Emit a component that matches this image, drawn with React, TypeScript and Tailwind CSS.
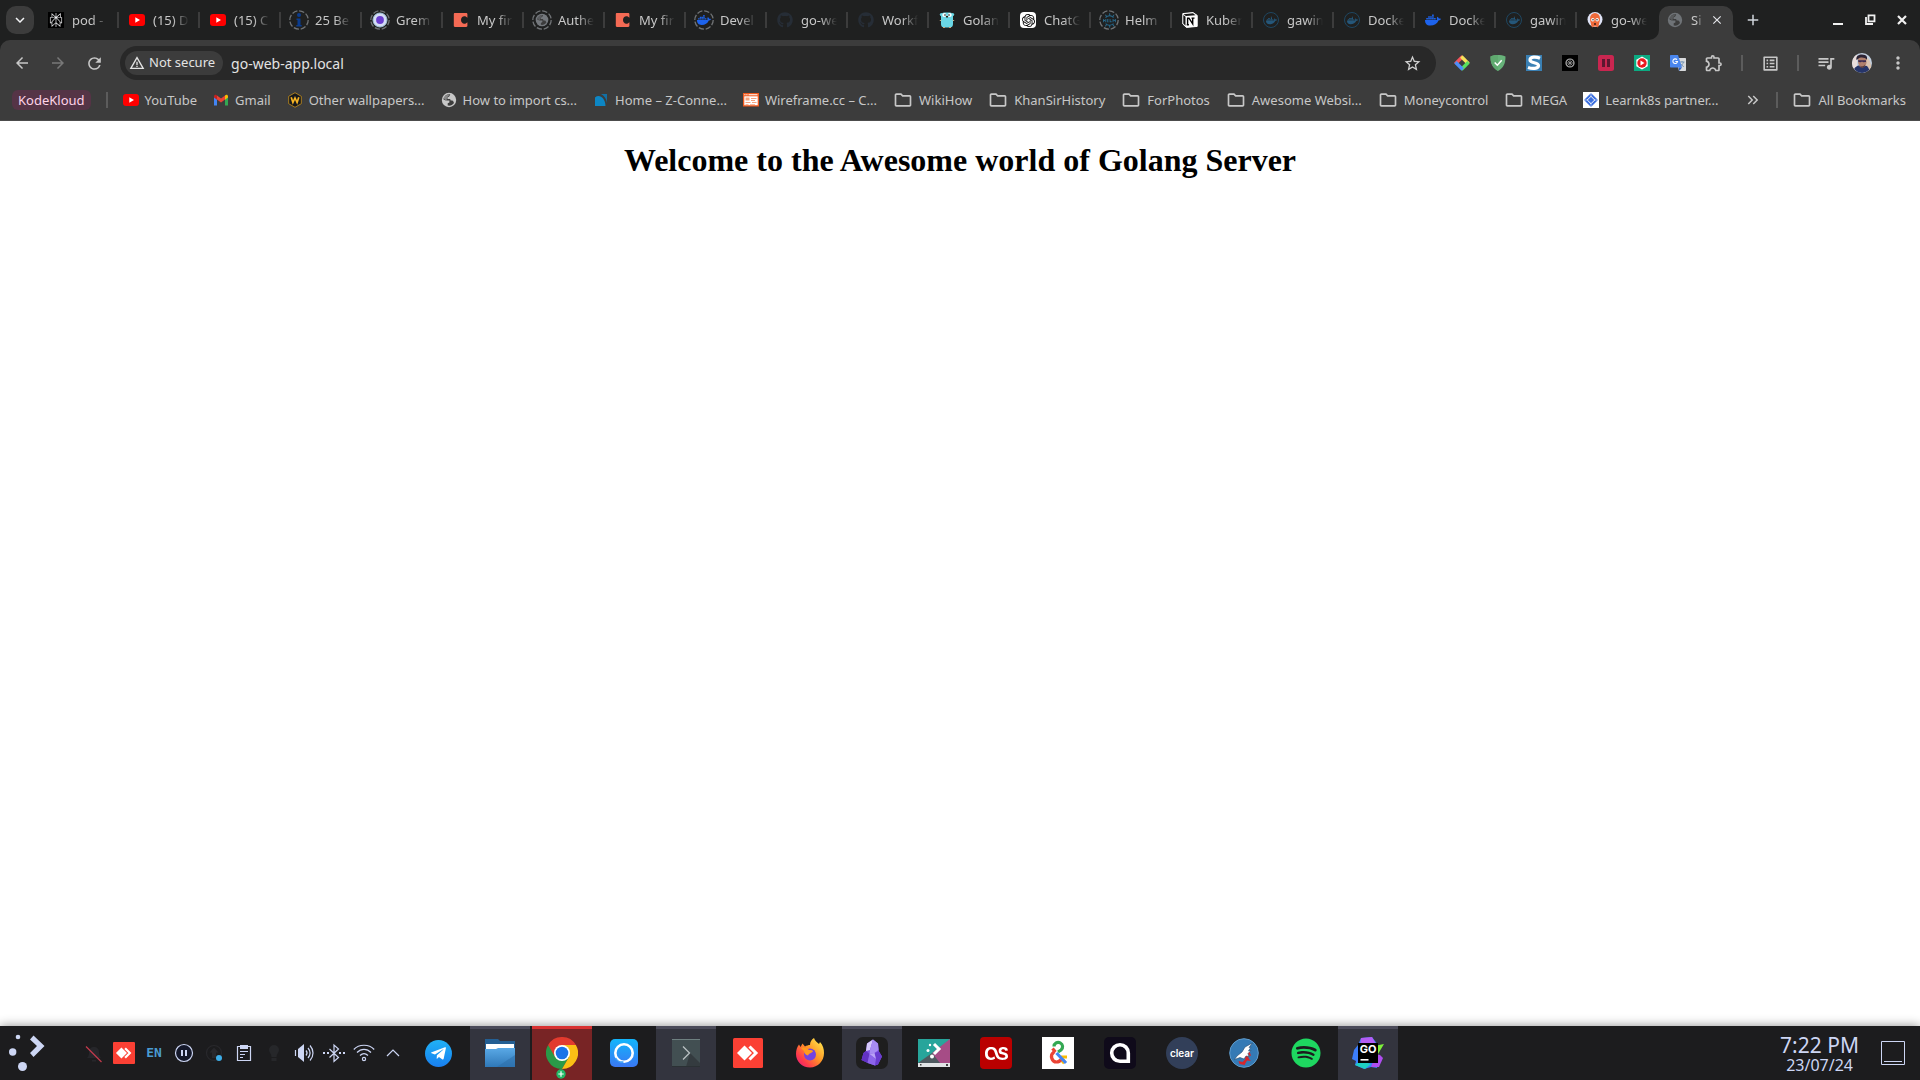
import React from "react";
import { FaDocker, FaGithub, FaTelegramPlane, FaSpotify } from "react-icons/fa";
import { SiOpenai, SiHelm, SiLastdotfm, SiPerplexity } from "react-icons/si";
import {
  MdArrowBack,
  MdArrowForward,
  MdRefresh,
  MdStarBorder,
  MdWarningAmber,
  MdOutlineExtension,
  MdQueueMusic,
  MdMoreVert,
  MdOutlineFolder,
  MdClose,
  MdAdd,
  MdOutlineListAlt,
  MdKeyboardDoubleArrowRight,
  MdKeyboardArrowDown,
} from "react-icons/md";

/* ---------- small favicons (16px) ---------- */

function Ringed({ children }: { children: React.ReactNode }) {
  return (
    <span className="relative grid size-4 place-items-center">
      <svg viewBox="0 0 20 20" className="absolute -inset-0.5 size-5 max-w-none" fill="none">
        <circle cx="10" cy="10" r="9.2" stroke="#707376" strokeWidth="1.3" strokeDasharray="5.4 1.8" />
      </svg>
      {children}
    </span>
  );
}

const Globe = ({ color, className }: { color: string; className: string }) => (
  <svg viewBox="0 0 16 16" className={className}>
    <circle cx="8" cy="8" r="7.2" fill={color} />
    <path
      d="M9.300 2.300C6 1.800 3 3.800 2.300 7.200l2.500 1.400h3.600v1.800l-1.700.9v2.200c2.600.6 5-.7 6.300-2.600l-1-2.100-2.700-.5V6.900H6.500V5.200l1.700-.6z"
      fill="#3c3c3c"
    />
    <path d="M2.600 6.200 5.500 8.800 6 5.600l2.500-2.800C5.800 2.200 3.300 3.600 2.600 6.200z" fill={color} opacity=".55" />
  </svg>
);

const YouTube = () => (
  <svg viewBox="0 0 16 16" className="size-4">
    <rect y="2" width="16" height="12" rx="3" fill="#f00" />
    <path d="M6.3 5.3v5.4L11 8z" fill="#fff" />
  </svg>
);

const PerplexityTile = () => (
  <span className="grid size-4 place-items-center bg-black text-gray-100">
    <SiPerplexity size={14} />
  </span>
);

const Info = () => (
  <svg viewBox="0 0 12 14" className="h-3.5 w-3" fill="#0b3c8f">
    <circle cx="6" cy="2" r="2" />
    <path d="M3.5 5.5h4V12h1.2v1.6H3.3V12h1.2V7h-1z" />
  </svg>
);

const Gremlin = () => (
  <svg viewBox="0 0 16 16" className="size-4">
    <circle cx="8" cy="8" r="7" fill="#d5dcf5" />
    <circle cx="8" cy="8" r="7" fill="none" stroke="#9fc4d8" strokeWidth="1" />
    <circle cx="8" cy="8" r="3.9" fill="#6a3fd0" />
  </svg>
);

const Coda = () => (
  <svg viewBox="0 0 16 16" className="size-4">
    <path
      fill="#f46a54"
      d="M1.8 1h11.4c.7 0 1.2.5 1.2 1.2v3.6C13.7 5 12.600 4.300 11.400 4.300c-2 0-3.400 1.700-3.400 3.700s1.400 3.700 3.400 3.700c1.200 0 2.300-.7 3-1.500v3.600c0 .7-.5 1.200-1.200 1.200H1.800C1.300 15 .8 14.500.8 13.800V2.200C.8 1.500 1.300 1 1.800 1z"
    />
  </svg>
);

const Gopher = () => (
  <svg viewBox="0 0 16 16" className="size-4">
    <circle cx="2.300" cy="2.400" r="1.500" fill="#6ad7e5" />
    <circle cx="13.700" cy="2.400" r="1.500" fill="#6ad7e5" />
    <rect x="2" y="0.500" width="12" height="15" rx="3.500" fill="#6ad7e5" />
    <circle cx="5.300" cy="3" r="2" fill="#fff" />
    <circle cx="10.700" cy="3" r="2" fill="#fff" />
    <circle cx="6" cy="3" r=".8" fill="#111" />
    <circle cx="10" cy="3" r=".8" fill="#111" />
    <rect x="7" y="4" width="2" height="1.500" fill="#2d2418" />
    <path d="M.8 8.500h1.400M13.800 8.500h1.400M4 15.500h2M10 15.500h2" stroke="#c9a678" strokeWidth="1" />
  </svg>
);

const ChatGPT = () => (
  <span className="grid size-4 place-items-center rounded-sm bg-white text-black">
    <SiOpenai size={13} />
  </span>
);

const Notion = () => (
  <svg viewBox="0 0 16 16" className="size-4">
    <path d="M.8 1.600 11 .6l4.200 2.800v11l-10.800 1L.8 12z" fill="#fff" stroke="#fff" strokeWidth="1" strokeLinejoin="round" />
    <path d="M1.500 2.300 11 1.300l2.500 1.900-9.600.8zM1.300 3l2.200 1.700v9L1.300 11.500z" fill="#161616" />
    <path d="M5.600 12.800V6.300M5 6.200h2l3.700 5.600V6.200M9.500 6.100h3M4.700 12.800h2.200" fill="none" stroke="#000" strokeWidth="1.400" />
  </svg>
);

const DockerHub = () => (
  <span className="grid size-4 place-items-center rounded-full border border-[#1e4660] text-[#25577a]">
    <FaDocker size={11} />
  </span>
);

const Argo = () => (
  <svg viewBox="0 0 16 16" className="size-4">
    <circle cx="8" cy="7.500" r="7.500" fill="#dfe3f6" />
    <path d="M3 6.500a5 5.500 0 0 1 10 0c0 3.300-1 4.500-1.200 7l-1 2-1.300-1h-3l-1.300 1-1-2C4 11 3 9.800 3 6.500z" fill="#ef6a3a" />
    <circle cx="5.800" cy="7.800" r="1.700" fill="#fff" />
    <circle cx="10.200" cy="7.800" r="1.700" fill="#fff" />
    <circle cx="6" cy="7.800" r=".7" fill="#111" />
    <circle cx="10" cy="7.800" r=".7" fill="#111" />
    <path d="M7 11.200h2v1.500H7z" fill="#3b1d18" />
  </svg>
);

const Gmail = () => (
  <svg viewBox="0 0 16 16" className="size-4">
    <path d="M1 4.500V13.400h3V7z" fill="#4285f4" />
    <path d="M12 7v6.400h3V4.500z" fill="#34a853" />
    <path d="M4 3.600v4L8 10.600l4-3v-4l-4 3z" fill="#ea4335" />
    <path d="M1 4.300v1.300l3 2.200V3.600l-.8-.6C2.300 2.400 1 3 1 4.300z" fill="#c5221f" />
    <path d="M15 4.300v1.300l-3 2.200V3.600l.8-.6c.9-.6 2.200 0 2.200 1.300z" fill="#fbbc04" />
  </svg>
);

const Wallpapers = () => (
  <svg viewBox="0 0 16 16" className="size-4">
    <path d="M8 .7 14.300 4.300v7.400L8 15.300 1.700 11.700V4.300z" fill="#16181c" stroke="#c8901c" strokeWidth=".8" />
    <path d="m4.200 5.300 1.700 5.200L8 6l2.100 4.500 1.700-5.200" fill="none" stroke="#f5b324" strokeWidth="1.700" />
  </svg>
);

const Zerodha = () => (
  <svg viewBox="0 0 16 16" className="size-4">
    <path d="M2 5.500C6 2 12 5 12.500 14H2z" fill="#0d86c4" />
    <path d="M8 2h6v9C13.500 6.500 11 3.500 8 2z" fill="#1270a5" />
  </svg>
);

const Wireframe = () => (
  <svg viewBox="0 0 16 16" className="size-4">
    <path d="M0 1h16v13.500H0z" fill="#f05a1e" />
    <path d="M1.300 4.300h13.400v8.900H1.300z" fill="#fff" />
    <path d="M2.500 5.500h4v3h-4zM8 6h5.500v1H8zM8 8h4v1H8zM2.500 10h5v1h-5zM9 10h4.500v1H9zM2.500 12h3v.8h-3zM7 12h5v.8H7z" fill="#f5a37f" />
    <path d="M1.300 2.200h1.200v1H1.300zM3.300 2.200h1.200v1H3.300zM5.500 2.200h9v1h-9z" fill="#fff" />
  </svg>
);

const LearnK8s = () => (
  <svg viewBox="0 0 16 16" className="size-4">
    <path d="M0 0h16v16H0z" fill="#fff" />
    <path d="M8 1 15 8 8 15 1 8z" fill="#3b6fe0" />
    <path d="M8 4.300 11.700 8 8 11.700 4.300 8z" fill="none" stroke="#fff" strokeWidth="1" />
    <path d="M8 1v4M8 11v4M1 8h4M11 8h4" stroke="#fff" strokeWidth=".5" />
  </svg>
);

/* ---------- tab strip ---------- */

const tabs: { label: string; icon: React.ReactNode }[] = [
  { label: "pod -", icon: <PerplexityTile /> },
  { label: "(15) D", icon: <YouTube /> },
  { label: "(15) C", icon: <YouTube /> },
  { label: "25 Be", icon: <Ringed><Info /></Ringed> },
  { label: "Grem", icon: <Ringed><Gremlin /></Ringed> },
  { label: "My fir", icon: <Coda /> },
  { label: "Authe", icon: <Ringed><Globe color="#74787d" className="size-3.5" /></Ringed> },
  { label: "My fir", icon: <Coda /> },
  { label: "Devel", icon: <Ringed><FaDocker size={14} color="#1d63ed" /></Ringed> },
  { label: "go-we", icon: <FaGithub size={16} color="#262d36" /> },
  { label: "Workf", icon: <FaGithub size={16} color="#262d36" /> },
  { label: "Golan", icon: <Gopher /> },
  { label: "ChatG", icon: <ChatGPT /> },
  { label: "Helm", icon: <Ringed><SiHelm size={15} color="#27678a" /></Ringed> },
  { label: "Kuber", icon: <Notion /> },
  { label: "gawin", icon: <DockerHub /> },
  { label: "Docke", icon: <DockerHub /> },
  { label: "Docke", icon: <FaDocker size={16} color="#1d63ed" /> },
  { label: "gawin", icon: <DockerHub /> },
  { label: "go-we", icon: <Argo /> },
];

const Flare = ({ className, d }: { className: string; d: string }) => (
  <svg viewBox="0 0 10 10" className={className}>
    <path d={d} fill="#3c3c3c" />
  </svg>
);

function TabStrip() {
  return (
    <div className="flex h-10 items-center bg-[#1f2020] pl-1.5 pr-0.5 text-[#c7c7c7]">
      <button aria-label="Search tabs" className="mr-1 grid size-7 shrink-0 place-items-center rounded-[10px] bg-[#3c3c3c] text-gray-100">
        <MdKeyboardArrowDown size={18} />
      </button>
      <div role="tablist" className="flex h-10 min-w-0 items-center">
        {tabs.map((t, i) => (
          <button key={i} role="tab" aria-selected="false" className="flex h-8 w-[81px] items-center pl-2.5">
            <span className="mr-2 grid size-4 shrink-0 place-items-center">{t.icon}</span>
            <span className="w-9 overflow-hidden whitespace-nowrap text-left text-[13px] leading-5 [mask-image:linear-gradient(to_right,black_55%,transparent)]">
              {t.label}
            </span>
            {i < tabs.length - 1 && <span className="ml-auto h-4 w-0.5 bg-[#3c3c3c]" />}
          </button>
        ))}
        <div className="relative ml-px flex h-[34px] w-[74px] items-center self-end rounded-t-[10px] bg-[#3c3c3c] pb-1.5 pl-2">
          <Flare className="absolute -left-2.5 bottom-0 size-2.5" d="M10 0v10H0A10 10 0 0 0 10 0z" />
          <Flare className="absolute -right-2.5 bottom-0 size-2.5" d="M0 0v10h10A10 10 0 0 1 0 0z" />
          <button role="tab" aria-selected="true" className="flex items-center">
            <Globe color="#6f7377" className="size-4" />
            <span className="ml-2 w-3 overflow-hidden whitespace-nowrap text-left text-[13px] leading-5 [mask-image:linear-gradient(to_right,black_50%,transparent)]">
              Si
            </span>
          </button>
          <button aria-label="Close tab" className="ml-1.5 grid size-4 place-items-center text-gray-200">
            <MdClose size={14} />
          </button>
        </div>
      </div>
      <button aria-label="New tab" className="ml-1.5 grid size-7 place-items-center text-gray-300">
        <MdAdd size={18} />
      </button>
      <div className="flex-1" />
      <button aria-label="Minimize" className="grid size-8 place-items-center">
        <svg viewBox="0 0 12 12" className="size-3"><path d="M1 9h10v2H1z" fill="#f1f1f1" /></svg>
      </button>
      <button aria-label="Restore" className="grid size-8 place-items-center">
        <svg viewBox="0 0 12 12" className="size-3" fill="none" stroke="#f1f1f1" strokeWidth="1.800">
          <path d="M4.500 1.400h6v6h-6zM2 3v7h7" />
        </svg>
      </button>
      <button aria-label="Close" className="grid size-8 place-items-center">
        <svg viewBox="0 0 12 12" className="size-3"><path d="m2 2 8 8M10 2l-8 8" stroke="#f1f1f1" strokeWidth="2.200" /></svg>
      </button>
    </div>
  );
}

/* ---------- toolbar ---------- */

const extensions: { name: string; icon: React.ReactNode }[] = [
  {
    name: "Colour diamond",
    icon: (
      <svg viewBox="0 0 16 16" className="size-4" fill="none" strokeWidth="3.400">
        <path d="M1.200 9 8.700 1.500" stroke="#f4525b" />
        <path d="m7.300 1.500 7.200 7.200" stroke="#f6e05a" />
        <path d="M14.500 7.300 7.300 14.500" stroke="#57e05f" />
        <path d="M8.700 14.500 1.500 7.300" stroke="#4d8ef7" />
      </svg>
    ),
  },
  {
    name: "AdGuard",
    icon: (
      <svg viewBox="0 0 16 16" className="size-4">
        <path d="M8 0c2.500 0 5 .4 7.500 1.500 0 7-1.800 11-7.500 14.500C2.300 12.500.5 8.500.5 1.500 3 .4 5.500 0 8 0z" fill="#67b279" />
        <path d="M8 0v16C2.300 12.500.5 8.500.5 1.500 3 .4 5.500 0 8 0z" fill="#5fa96f" />
        <path d="m4.700 7.500 2.600 2.700 4.400-5" fill="none" stroke="#fff" strokeWidth="1.500" />
      </svg>
    ),
  },
  {
    name: "Stylus",
    icon: (
      <svg viewBox="0 0 16 16" className="size-4">
        <path d="M0 0h16v16H0z" fill="#3a80b4" />
        <path d="M14 3.200C10 1.500 4 1.500 4 5c0 3.500 8.500 2 8.500 5.500 0 3.500-6.500 3.500-10.500 2" fill="none" stroke="#fff" strokeWidth="3.200" />
      </svg>
    ),
  },
  {
    name: "Dark wheel",
    icon: (
      <svg viewBox="0 0 16 16" className="size-4">
        <path d="M0 0h16v16H0z" fill="#000" />
        <circle cx="8" cy="8" r="4" fill="none" stroke="#aaa" strokeWidth="1.200" />
        <path d="M8 4v8M4 8h8M5.200 5.200l5.600 5.600M10.800 5.200l-5.600 5.600" stroke="#999" strokeWidth=".8" />
      </svg>
    ),
  },
  {
    name: "Pause",
    icon: (
      <svg viewBox="0 0 16 16" className="size-4">
        <rect width="16" height="16" rx="2.500" fill="#c92650" />
        <path d="M4 4h3v8H4zM9 4h3v8H9z" fill="#5c1730" />
      </svg>
    ),
  },
  {
    name: "Video enhancer",
    icon: (
      <svg viewBox="0 0 16 16" className="size-4">
        <path d="M0 0h16v16H0z" fill="#0bab82" />
        <path d="M8 1.500 13.700 4.700v6.600L8 14.500 2.300 11.300V4.700z" fill="#fff" />
        <circle cx="8" cy="8" r="4.700" fill="#e8191f" />
        <path d="M6.500 5.500v5L10.500 8z" fill="#fff" />
      </svg>
    ),
  },
  {
    name: "Translate",
    icon: (
      <svg viewBox="0 0 16 16" className="size-4">
        <path d="M6 3h9c.6 0 1 .4 1 1v11c0 .6-.4 1-1 1H9z" fill="#d8dadc" />
        <path d="M9.500 7h5M12 6v1M13.500 7c-.5 2-2 3.500-3.500 4.500M10.500 8.500c.8 1.500 2 2.500 3.300 3.200" fill="none" stroke="#6d8fae" strokeWidth=".9" />
        <path d="M1 0h7l4 12.500H1c-.6 0-1-.4-1-1V1c0-.6.4-1 1-1z" fill="#4a86ee" />
        <path d="M8.700 12.500H12L9.300 16z" fill="#2a5fc4" />
        <path d="M7 4.700A2.300 2.300 0 1 0 7.500 6.500H5.300" fill="none" stroke="#fff" strokeWidth="1.100" />
      </svg>
    ),
  },
  { name: "Extensions", icon: <MdOutlineExtension size={20} /> },
];

const Avatar = () => (
  <svg viewBox="0 0 20 20" className="size-5 rounded-full">
    <path d="M0 0h20v20H0z" fill="#c3cfdf" />
    <path d="M0 0h5v20H0z" fill="#e9dedd" />
    <path d="M14 4c4 2 6 8 5 16h-7z" fill="#d9c3b0" />
    <path d="M2 20c-1-5 2-7 6-8l7 1c2 2 3 5 2 7z" fill="#26356a" />
    <path d="M6 5c0-3 7-4 8 0l.5 4c0 3-2 5.500-4.500 5.500S6.500 12 6 9z" fill="#b0806e" />
    <path d="M4.500 7C3 1 13 0 15 4l0 3c-2-3-7-3-9-1z" fill="#2c2334" />
    <path d="M6 7.200h8V9l-3 .3-1-.8-1 .8-2.500-.3z" fill="#3a2b52" />
    <path d="M7.500 12c1 2 4 2 5.500-.5L12.500 14l-3 1z" fill="#55393a" />
  </svg>
);

const iconButton = "grid size-9 shrink-0 place-items-center text-[#c7c7c7]";

function Toolbar() {
  return (
    <div className="flex h-[46px] items-center rounded-t-[10px] bg-[#3c3c3c] pl-1 pr-1">
      <button aria-label="Back" className={iconButton}><MdArrowBack size={18} /></button>
      <button aria-label="Forward" className="grid size-9 shrink-0 place-items-center text-[#787878]"><MdArrowForward size={18} /></button>
      <button aria-label="Reload" className={iconButton}><MdRefresh size={19} /></button>
      <div className="ml-2 mr-2 flex h-[34px] min-w-0 flex-1 items-center rounded-full bg-[#282828] pl-[5px] pr-2">
        <button className="flex h-6 shrink-0 items-center gap-1 rounded-full bg-[#3c3c3c] pl-1 pr-2 text-[13px] text-[#e3e3e3]">
          <MdWarningAmber size={16} />
          Not secure
        </button>
        <input
          id="address"
          aria-label="Address"
          defaultValue="go-web-app.local"
          className="ml-2 h-7 min-w-0 flex-1 bg-transparent text-[14px] text-[#e3e3e3] outline-none"
        />
        <button aria-label="Bookmark this page" className="grid size-8 place-items-center text-[#d0d0d0]"><MdStarBorder size={19} /></button>
      </div>
      {extensions.map((e) => (
        <button key={e.name} aria-label={e.name} className={iconButton}>{e.icon}</button>
      ))}
      <span className="mx-[9px] h-4 w-0.5 bg-[#5c5c5c]" />
      <button aria-label="Reading list" className={iconButton}><MdOutlineListAlt size={19} /></button>
      <span className="mx-[9px] h-4 w-0.5 bg-[#5c5c5c]" />
      <button aria-label="Media controls" className={iconButton}><MdQueueMusic size={20} /></button>
      <button aria-label="Profile" className={iconButton}><Avatar /></button>
      <button aria-label="Menu" className={iconButton}><MdMoreVert size={20} /></button>
    </div>
  );
}

/* ---------- bookmarks bar ---------- */

const Folder = () => <MdOutlineFolder size={20} />;

const bookmarks: { label: string; icon: React.ReactNode }[] = [
  { label: "YouTube", icon: <YouTube /> },
  { label: "Gmail", icon: <Gmail /> },
  { label: "Other wallpapers...", icon: <Wallpapers /> },
  { label: "How to import cs...", icon: <Globe color="#c7c7c7" className="size-4" /> },
  { label: "Home – Z-Conne...", icon: <Zerodha /> },
  { label: "Wireframe.cc – C...", icon: <Wireframe /> },
  { label: "WikiHow", icon: <Folder /> },
  { label: "KhanSirHistory", icon: <Folder /> },
  { label: "ForPhotos", icon: <Folder /> },
  { label: "Awesome Websi...", icon: <Folder /> },
  { label: "Moneycontrol", icon: <Folder /> },
  { label: "MEGA", icon: <Folder /> },
  { label: "Learnk8s partner...", icon: <LearnK8s /> },
];

function BookmarksBar() {
  return (
    <nav aria-label="Bookmarks" className="flex h-[35px] items-center border-b border-[#4c4c4c] bg-[#3c3c3c] pb-1.5 pl-3 pr-3.5 text-[13px] leading-5 text-[#c7c7c7]">
      <button className="h-5 rounded-md bg-[#553446] px-1.5 text-[#ffd3e8]">KodeKloud</button>
      <span className="ml-[15px] mr-[7px] h-4 w-0.5 bg-[#5c5c5c]" />
      {bookmarks.map((b) => (
        <a key={b.label} href="#" className="flex shrink-0 items-center gap-1.5 whitespace-nowrap px-2">
          {b.icon}
          {b.label}
        </a>
      ))}
      <div className="flex-1" />
      <button aria-label="More bookmarks"><MdKeyboardDoubleArrowRight size={18} /></button>
      <span className="mx-3.5 h-4 w-0.5 bg-[#5c5c5c]" />
      <button className="flex items-center gap-1.5"><Folder />All Bookmarks</button>
    </nav>
  );
}

/* ---------- taskbar ---------- */

const AnyDesk = ({ className }: { className: string }) => (
  <svg viewBox="0 0 30 30" className={className}>
    <rect width="30" height="30" rx="1.500" fill="#fb4034" />
    <path d="m11.500 7.500 7.500 7.500-7.500 7.500L4 15z" fill="#fff" />
    <path d="m16.500 8.500 6.500 6.500-6.500 6.500" fill="none" stroke="#fff" strokeWidth="3" />
  </svg>
);

const tray: { name: string; icon: React.ReactNode }[] = [
  {
    name: "Notifications muted",
    icon: (
      <svg viewBox="0 0 22 22" className="size-[22px]">
        <path d="M4 16h14c-2-2-2-4-2-6 0-3-2-5-5-5S6 7 6 10c0 2 0 4-2 6zM9 18h4v1.500H9z" fill="#26262a" />
        <path d="M3 4.500 18.500 20" stroke="#c23a4c" strokeWidth="1.200" />
      </svg>
    ),
  },
  { name: "AnyDesk", icon: <AnyDesk className="size-[22px]" /> },
  { name: "Keyboard layout", icon: <span className="font-['DejaVu_Sans_Mono',monospace] text-[13px] font-bold text-[#4a9bd0]">EN</span> },
  {
    name: "Pause",
    icon: (
      <svg viewBox="0 0 22 22" className="size-[22px]">
        <circle cx="11" cy="11" r="8.500" fill="#14182a" stroke="#cdd6f4" strokeWidth="1.200" />
        <path d="M8 8h2v6H8zM12 8h2v6h-2z" fill="#cdd6f4" />
      </svg>
    ),
  },
  {
    name: "Updates",
    icon: (
      <svg viewBox="0 0 22 22" className="size-[22px]">
        <circle cx="11" cy="11" r="7.500" fill="none" stroke="#28282c" strokeWidth="1.200" />
        <path d="m11 5.500 4.500 5H13V16H9v-5.500H6.500z" fill="#28282c" />
        <circle cx="16" cy="16" r="3" fill="#3daee9" />
      </svg>
    ),
  },
  {
    name: "Clipboard",
    icon: (
      <svg viewBox="0 0 22 22" className="size-[22px]" fill="none" stroke="#cdd6f4">
        <path d="M4.500 4.500h13v14h-13z" strokeWidth="1.200" />
        <path d="M7 3h8v4H7z" fill="#cdd6f4" stroke="none" />
        <path d="M7 9.500h8M7 12.500h5M7 15.500h3" strokeWidth="1.200" />
      </svg>
    ),
  },
  {
    name: "Night light",
    icon: (
      <svg viewBox="0 0 22 22" className="size-[22px]" fill="#26272a">
        <path d="M11 3a5 5 0 0 1 5 5c0 2.500-2.500 4-2.500 7h-5c0-3-2.500-4.500-2.500-7a5 5 0 0 1 5-5zM8.500 16h5v3h-5z" />
      </svg>
    ),
  },
  {
    name: "Volume",
    icon: (
      <svg viewBox="0 0 22 22" className="size-[22px]" fill="none" stroke="#cdd6f4" strokeWidth="1.200">
        <path d="M5 7 11 2v18l-6-5z" fill="#cdd6f4" stroke="none" />
        <path d="M2.500 8v6" />
        <path d="M13 8.500c1.300 1.500 1.300 3.500 0 5M15 6c2.500 3 2.500 7 0 10M17 3.500c4 4.500 4 10.500 0 15" />
      </svg>
    ),
  },
  {
    name: "Bluetooth",
    icon: (
      <svg viewBox="0 0 22 22" className="size-[22px]" fill="none" stroke="#cdd6f4" strokeWidth="1.200">
        <path d="m6.500 7 9 8.500-4.500 4V3l4.500 4-9 8.500" />
        <path d="M0 11h2M4 11h2M16 11h2M20 11h2" strokeWidth="2" />
      </svg>
    ),
  },
  {
    name: "Wi-Fi",
    icon: (
      <svg viewBox="0 0 22 22" className="size-[22px]" fill="none" stroke="#cdd6f4" strokeWidth="1.200">
        <path d="M.8 7.500C6 1.800 16 1.800 21.200 7.500M4 10.500c4-4.200 10-4.200 14 0M7 13.500c2.500-2.400 5.500-2.400 8 0" />
        <circle cx="11" cy="17" r="1.600" />
      </svg>
    ),
  },
  {
    name: "Show hidden icons",
    icon: (
      <svg viewBox="0 0 22 22" className="size-[22px]" fill="none" stroke="#cdd6f4" strokeWidth="1.200">
        <path d="m4 14 6-6 6 6" />
      </svg>
    ),
  },
];

const apps: { name: string; state?: "open" | "alert"; icon: React.ReactNode }[] = [
  {
    name: "Telegram",
    icon: (
      <span className="grid size-[27px] place-items-center rounded-full bg-linear-to-b from-[#22b1f5] to-[#1a7ff0] text-white">
        <FaTelegramPlane size={17} />
      </span>
    ),
  },
  {
    name: "Files",
    state: "open",
    icon: (
      <svg viewBox="0 0 32 32" className="size-8">
        <defs>
          <linearGradient id="files" x2="0" y2="1"><stop stopColor="#5aa9e6" /><stop offset="1" stopColor="#2f78b8" /></linearGradient>
        </defs>
        <path d="M1 2h13l2 2h15v12H1z" fill="#245f93" />
        <path d="M2 7h28v6H2z" fill="#fff" />
        <path d="M1 12h11l2-1h17v19H1z" fill="url(#files)" />
        <path d="M31 18v12H13z" fill="#2b6ca6" opacity=".5" />
      </svg>
    ),
  },
  {
    name: "Chrome",
    state: "alert",
    icon: (
      <svg viewBox="0 0 32 32" className="size-8">
        <path d="M16 16 2.140 8A16 16 0 0 0 16 32l7-12z" fill="#2a9a48" />
        <path d="M16 8h13.860A16 16 0 0 1 16 32l7-12z" fill="#fbbf15" />
        <path d="M2.140 8 9 20l7-12h13.860A16 16 0 0 0 2.140 8z" fill="#e23a2e" />
        <circle cx="16" cy="16" r="8" fill="#fff" />
        <circle cx="16" cy="16" r="6.300" fill="#1a73e8" />
      </svg>
    ),
  },
  {
    name: "Ring",
    icon: (
      <svg viewBox="0 0 28 28" className="size-7">
        <defs>
          <linearGradient id="ring" x2="0" y2="1"><stop stopColor="#12b5fb" /><stop offset="1" stopColor="#3a78f4" /></linearGradient>
        </defs>
        <rect width="28" height="28" rx="5" fill="url(#ring)" />
        <circle cx="14" cy="14" r="8.700" fill="none" stroke="#fff" strokeWidth="2.600" />
        <path d="M5.500 19c1.500 3 5 4.500 8 4" fill="none" stroke="#3fa0f8" strokeWidth="1.600" />
      </svg>
    ),
  },
  {
    name: "Terminal",
    state: "open",
    icon: (
      <svg viewBox="0 0 28 28" className="size-7">
        <path d="M0 0h28v28H0z" fill="#424f52" />
        <path d="M18 14 28 24v4H14z" fill="#343b3f" />
        <path d="M0 0h28v1H0z" fill="#6e7f80" />
        <path d="M0 27h28v1H0z" fill="#2b3134" />
        <path d="m11 7.500 6.500 6.500-6.500 6.500" fill="none" stroke="#b9c0c2" strokeWidth="1.300" />
      </svg>
    ),
  },
  { name: "AnyDesk", icon: <AnyDesk className="size-[30px]" /> },
  {
    name: "Firefox",
    icon: (
      <svg viewBox="0 0 30 30" className="size-[30px]">
        <defs>
          <linearGradient id="fox" x1="1" x2="0" y2="1"><stop offset=".1" stopColor="#ffe14a" /><stop offset=".45" stopColor="#ff9526" /><stop offset=".75" stopColor="#ff3b4b" /><stop offset="1" stopColor="#e31587" /></linearGradient>
        </defs>
        <path d="M19 0c1 3 3 4 5 6l1-2c3 3 4 7 4 11 0 8-6 14.500-14 14.500S1 23.500 1 16c0-4 1-7 3-9.500L5.500 9l2-3.500 2.500 3c1.500-1 3.500-1.500 5-1.500 0-3 1.500-5.500 4-7z" fill="url(#fox)" />
        <circle cx="15" cy="16.500" r="6" fill="#7543e0" />
        <path d="M6 10c3-1 6 0 8 2 2.500 0 4 0 4 1.500-1.500 1.500-4 1.500-5 4-2-.5-4-2-4-4.500z" fill="#ff9a1f" />
      </svg>
    ),
  },
  {
    name: "Obsidian",
    state: "open",
    icon: (
      <svg viewBox="0 0 32 32" className="size-8">
        <rect width="32" height="32" rx="7" fill="#1e1e1e" />
        <path d="m17 2.500 5 4 1 8 3 5-4 8-3 1-7-2.500-6.500-3L7.500 16l2.500-2 1-7.500z" fill="#7c4fe0" />
        <path d="m17 2.500-6 4-1 7.500 4-1z" fill="#d6c9fb" />
        <path d="m17 2.500-3 10.500-.5 4 5-1 4-3-.5-6.500z" fill="#a78bf3" />
        <path d="m10 14-2.500 2L5.500 23l6 3 2-9z" fill="#6232c4" />
        <path d="m13.500 17-2 9 7.500 2.500 1-6z" fill="#8c64ea" />
        <path d="m18.500 16 4.500-1.500 3 5-4 8-3 1 1-6z" fill="#6a3ccf" />
        <path d="m13.500 17 5-1 1.500 6z" fill="#b9a2f6" />
      </svg>
    ),
  },
  {
    name: "Desktop settings",
    icon: (
      <svg viewBox="0 0 32 28" className="h-7 w-8">
        <path d="M0 0h32v28H0z" fill="#2ba394" />
        <path d="M0 0h32L14 14 0 24z" fill="#27a59b" />
        <path d="M32 0v24H20l-6-10z" fill="#a64c86" />
        <path d="M0 24 14 14l8 10z" fill="#4e5a60" />
        <path d="M0 24h32v4H0z" fill="#e1e4e6" />
        <path d="M2 25h1.500v1.500H2zM28 25h2v2h-2z" fill="#444" />
        <path d="m16 5 5 5-5 5" fill="none" stroke="#fff" strokeWidth="3" />
        <circle cx="12" cy="6" r="1.200" fill="#fff" /><circle cx="10" cy="11.500" r="1.500" fill="#fff" /><circle cx="14" cy="17.500" r="2" fill="#fff" />
      </svg>
    ),
  },
  {
    name: "Last.fm",
    icon: <span className="grid size-8 place-items-center rounded-sm bg-[#ba0000] text-white"><SiLastdotfm size={23} /></span>,
  },
  {
    name: "Pay",
    icon: (
      <svg viewBox="0 0 32 32" className="size-8" fill="none" strokeWidth="3.200">
        <path d="M0 0h32v32H0z" fill="#fff" />
        <path d="M20.500 20.500V20h4.500M20 26l3-3" stroke="#fbbc04" />
        <path d="M12 9.500A4.300 4.300 0 1 1 19 13l-3 2" stroke="#34a853" />
        <path d="m12.500 13.500-1 2c-4 3-1.500 9.500 3 9.500 2 0 3.500-1 4.500-2.500M10.500 11.500l3 3.500" stroke="#ea4335" />
        <path d="m14.500 16 9.500 10" stroke="#4285f4" />
      </svg>
    ),
  },
  {
    name: "Aria",
    icon: (
      <svg viewBox="0 0 32 32" className="size-8">
        <rect width="32" height="32" rx="5" fill="#0f0a1a" />
        <path d="M16 7.700a8.300 8.300 0 0 1 8.300 8.300v8.300H16A8.300 8.300 0 0 1 16 7.700z" fill="none" stroke="#fff" strokeWidth="3.600" />
      </svg>
    ),
  },
  {
    name: "Clear",
    icon: (
      <span className="grid size-8 place-items-center rounded-full bg-[#323f59] font-['Inter',sans-serif] text-[10px] font-semibold text-white">
        clear
      </span>
    ),
  },
  {
    name: "Bird",
    icon: (
      <svg viewBox="0 0 30 30" className="size-[30px]">
        <circle cx="15" cy="15" r="14.300" fill="#357ab5" stroke="#5f9ccd" strokeWidth="1" />
        <path d="M20.500 13 22 18l-3.500-1 1.500 4 2 2-4-.5-2.500 4.500-5-1-1-3 4 1 3-3-1-3 2-3z" fill="#d7262b" />
        <path d="M23.500 5 16 9l-3 5-5 4-2.500 3.500L11 19.500l4 1.500 2-3 3 .5-1-3 3-3-2.500.5L22 9l-2 .5z" fill="#fff" stroke="#24486c" strokeWidth=".6" />
      </svg>
    ),
  },
  {
    name: "Spotify",
    icon: (
      <FaSpotify size={30} color="#1ed760" />
    ),
  },
  {
    name: "GoLand",
    state: "open",
    icon: (
      <span className="relative grid size-8 place-items-center">
        <svg viewBox="0 0 32 32" className="absolute inset-0 size-8">
          <path d="M9 1 20 0l3 4 3 4v18l-1 5-6-1-7 2-9-4 1-4-4-2 2-9 4-5z" fill="#3c7dfa" />
          <path d="M9 1 20 0l5 9H8z" fill="#b45cf5" />
          <path d="m22 9 10-2-6 10z" fill="#7df03a" />
          <path d="m24 17 4 1 3 3-4 9-8 0z" fill="#b04df0" />
          <path d="m8 24 11 3-6 5-10-4z" fill="#1ecfc0" />
          <path d="M6 6h20v20H6z" fill="#000" />
          <path d="M8.500 22h8v1.600h-8z" fill="#fff" />
        </svg>
        <span className="relative pb-2 font-['Inter',sans-serif] text-[11px] font-bold leading-none text-white">GO</span>
      </span>
    ),
  },
];

function Taskbar() {
  return (
    <footer className="z-10 flex h-[54px] shrink-0 items-stretch bg-[#1c1c1e] text-[#cdd6f4] shadow-[0_0_10px_rgba(0,0,0,0.45)]">
      <button aria-label="Application launcher" className="grid w-[79px] shrink-0 items-center pl-2">
        <svg viewBox="0 0 38 40" className="h-10 w-[38px]" fill="#cdd6f4">
          <circle cx="10" cy="4" r="2.300" />
          <circle cx="4.700" cy="19" r="3.700" />
          <circle cx="14.500" cy="33.500" r="4.500" />
          <path d="m22 6.500 3.500-4L36.500 13 25.500 24 22 20l7-7z" />
        </svg>
      </button>
      <div className="mr-[-1px] flex w-[330px] shrink-0 items-center">
        {tray.map((t) => (
          <button key={t.name} aria-label={t.name} className="grid h-10 w-[30px] shrink-0 place-items-center">
            {t.icon}
          </button>
        ))}
      </div>
      <div className="flex gap-0.5">
        {apps.map((a) => {
          const tone =
            a.state === "open"
              ? "border-[#4b4b59] bg-[#33343e]"
              : a.state === "alert"
                ? "border-[#d83232] bg-[#782425]"
                : "border-transparent";
          return (
            <button key={a.name} aria-label={a.name} className={`relative grid w-[60px] place-items-center border-t-[3px] pb-[3px] ${tone}`}>
              {a.icon}
              {a.state === "alert" && (
                <svg viewBox="0 0 10 10" className="absolute bottom-px left-6 size-2.5">
                  <circle cx="5" cy="5" r="4.700" fill="#22b865" />
                  <path d="M5 2.300v5.400M2.300 5h5.400" stroke="#fff" strokeWidth="1.200" />
                </svg>
              )}
            </button>
          );
        })}
      </div>
      <div className="flex-1" />
      <div className="flex flex-col items-center justify-center pr-[22px]">
        <time className="text-[21px] leading-6">7:22 PM</time>
        <time className="text-[16px] leading-4">23/07/24</time>
      </div>
      <button aria-label="Show desktop" className="mr-[15px] grid place-items-center">
        <svg viewBox="0 0 24 24" className="size-6" fill="none" stroke="#cdd6f4">
          <path d="M.5.5h23v23H.5zM3 20.500h18" />
        </svg>
      </button>
    </footer>
  );
}

export default function App() {
  return (
    <div className="flex h-screen flex-col bg-white font-['Noto_Sans',sans-serif]">
      <header className="shrink-0 bg-[#1f2020]">
        <TabStrip />
        <Toolbar />
        <BookmarksBar />
      </header>
      <main className="flex-1 overflow-hidden pt-[19px] text-center font-['Liberation_Serif',serif] text-black">
        <h1 className="text-[32px] font-bold leading-10">Welcome to the Awesome world of Golang Server</h1>
      </main>
      <Taskbar />
    </div>
  );
}
